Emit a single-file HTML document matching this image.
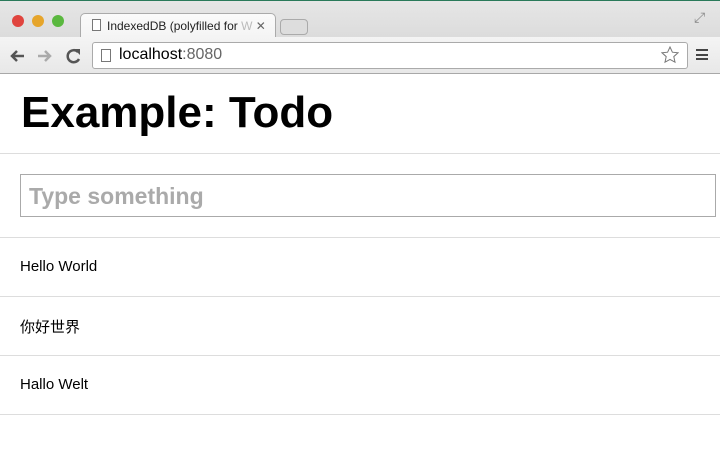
<!DOCTYPE html>
<html><head><meta charset="utf-8"><style>
*{margin:0;padding:0;box-sizing:border-box}
body{width:720px;height:472px;overflow:hidden;background:#fff;font-family:"Liberation Sans","Noto Sans CJK SC",sans-serif;position:relative}
.chrome{position:absolute;left:0;top:0;width:720px;height:73px;background:linear-gradient(#e6e6e6,#d2d2d2);border-top:1px solid #2a7a5a}
.tb{position:absolute;top:36px;left:0;width:720px;height:37px;background:linear-gradient(#f4f4f4,#e8e8e8);border-bottom:1px solid #a8a8a8}
.dot{position:absolute;top:14px;width:12px;height:12px;border-radius:50%}
.tab{position:absolute;left:80px;top:12px;width:196px;height:25px;background:linear-gradient(#fafafa,#f4f4f4);border:1px solid #aaa;border-bottom:none;border-radius:5px 5px 0 0}
.tabt{position:absolute;left:107px;top:18px;font-size:12px;color:#222}
.url{position:absolute;left:92px;top:41px;width:596px;height:27px;background:#fff;border:1px solid #aaa;border-radius:3px}
.urlt{position:absolute;left:119px;top:45px;font-size:16px;color:#000}
h1{position:absolute;left:21px;top:88px;font-size:44px;font-weight:bold;color:#000}
.line{position:absolute;left:0;width:720px;height:1px;background:#ddd}
.inp{position:absolute;left:20px;top:174px;width:696px;height:43px;border:1px solid #aaa;font-size:23px;font-weight:bold;color:#aaa;padding:8px 8px}
.item{position:absolute;left:20px;font-size:15px;color:#000}
</style></head><body>
<div class="chrome">
<div class="dot" style="left:12px;background:#e0443e"></div>
<div class="dot" style="left:32px;background:#e6a52b"></div>
<div class="dot" style="left:52px;background:#5ab83f"></div>
<div class="tab"></div>
<div style="position:absolute;left:92px;top:18px;width:9px;height:12px;border:1px solid #777;background:#fff"></div>
<div class="tabt">IndexedDB (polyfilled for <span style="color:#bbb">W</span> <span style="color:#666">✕</span></div>
<div style="position:absolute;left:280px;top:18px;width:28px;height:16px;border:1px solid #aaa;border-radius:4px;background:#ddd"></div>
<div style="position:absolute;left:694px;top:8px;font-size:14px;color:#888">⤢</div>
<div class="tb"></div>
<svg style="position:absolute;left:8px;top:46px" width="80" height="18">
<path d="M16 9H4M9 4L4 9l5 5" stroke="#555" stroke-width="2.5" fill="none"/>
<path d="M30 9h12M37 4l5 5-5 5" stroke="#aaa" stroke-width="2.5" fill="none"/>
<path d="M70 5A6 6 0 1 0 71 12" stroke="#555" stroke-width="2.5" fill="none"/>
<path d="M66 2h6v6z" fill="#555"/>
</svg>
<div class="url"></div>
<div style="position:absolute;left:101px;top:48px;width:10px;height:13px;border:1px solid #777"></div>
<div class="urlt">localhost<span style="color:#666">:8080</span></div>
<svg style="position:absolute;left:661px;top:45px" width="18" height="18"><path d="M9 1l2.4 5.2 5.6.6-4.2 3.8 1.2 5.6L9 13.4 4 16.2l1.2-5.6L1 6.8l5.6-.6z" fill="none" stroke="#777" stroke-width="1"/></svg>
<div style="position:absolute;left:696px;top:48px;width:12px;height:11px;border-top:2px solid #444;border-bottom:2px solid #444"><div style="margin-top:2.5px;height:2px;background:#444"></div></div>
</div>
<h1>Example: Todo</h1>
<div class="line" style="top:153px"></div>
<div class="inp">Type something</div>
<div class="line" style="top:237px"></div>
<div class="item" style="top:258px">Hello World</div>
<div class="line" style="top:296px"></div>
<div class="item" style="top:316px">你好世界</div>
<div class="line" style="top:355px"></div>
<div class="item" style="top:376px">Hallo Welt</div>
<div class="line" style="top:414px"></div>
</body></html>
